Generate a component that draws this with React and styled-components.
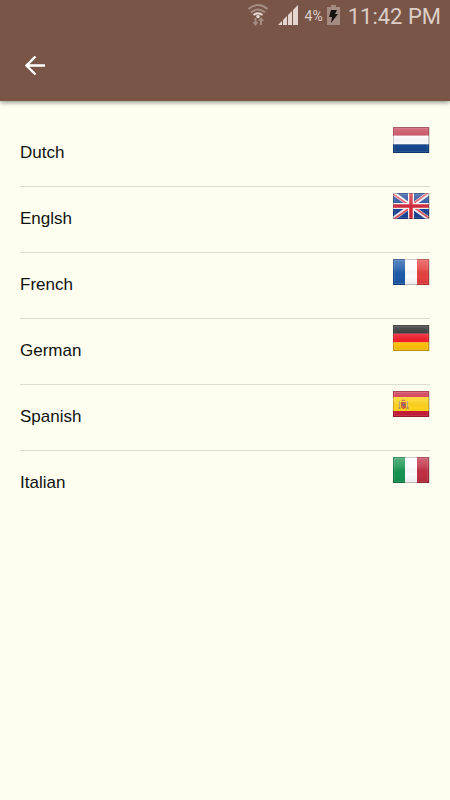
import React from "react";
import styled, { createGlobalStyle } from "styled-components";

const GlobalStyle = createGlobalStyle`
  *, *::before, *::after { box-sizing: border-box; }
  body {
    margin: 0;
    background: #fdfef0;
    color: #111;
    font-family: "Liberation Sans", Arial, sans-serif;
  }
`;

const Page = styled.div`
  min-height: 100vh;
  background: #fdfef0;
`;

const Header = styled.header`
  background: #795548;
  box-shadow: 0 1px 5px rgba(0, 0, 0, 0.5);
`;

const StatusBar = styled.div`
  display: flex;
  align-items: center;
  justify-content: flex-end;
  height: 30px;
  padding-right: 9px;
  color: #dccdc7;
  font-family: Roboto, sans-serif;

  svg { display: block; }
`;

const Battery = styled.span`
  margin: 0 4px 0 7px;
  padding-top: 2px;
  font-size: 14px;
  line-height: 20px;
`;

const Clock = styled.time`
  margin-left: 8px;
  padding-top: 4px;
  font-size: 22px;
  line-height: 26px;
`;

const Signal = styled.span`
  margin-left: 10px;
`;

const Toolbar = styled.div`
  display: flex;
  align-items: center;
  height: 71px;
  padding: 0 12px;
`;

const BackButton = styled.button`
  display: grid;
  place-items: center;
  width: 46px;
  height: 46px;
  padding: 0;
  border: 0;
  background: none;
  cursor: pointer;
`;

const LanguageList = styled.ul`
  margin: 0;
  padding: 20px;
  list-style: none;
`;

const LanguageItem = styled.li`
  border-bottom: 1px solid #dcddd0;

  &:last-child { border-bottom-color: transparent; }
`;

const LanguageButton = styled.button`
  display: flex;
  align-items: center;
  justify-content: space-between;
  width: 100%;
  height: 65px;
  padding: 0 0 2px;
  border: 0;
  background: none;
  color: inherit;
  font: 17px/20px "Liberation Sans", Arial, sans-serif;
  text-align: left;
  cursor: pointer;
`;

const FlagImage = styled.svg`
  flex: none;
  align-self: flex-start;
  width: 37px;
  height: 28px;
  margin-top: 5px;
`;

const Horizontal = ({ colors }) =>
  colors.map((c, i) => <rect key={i} y={i * 8.67} width="36" height="8.8" fill={c} />);

const Vertical = ({ colors }) =>
  colors.map((c, i) => <rect key={i} x={i * 12} width="12.1" height="26" fill={c} />);

const Union = () => (
  <>
    <rect width="36" height="26" fill="#1d4697" />
    <path d="M0 0L36 26M36 0L0 26" stroke="#f2f2f5" strokeWidth="4" />
    <path d="M0 1L17 13M35 0L18 12M1 26L18 14M36 25L19 13" stroke="#df535b" strokeWidth="1.7" />
    <path d="M18 0V26M0 13H36" stroke="#f4f4f4" strokeWidth="6" />
    <path d="M18 0V26M0 13H36" stroke="#d32638" strokeWidth="3.5" />
  </>
);

const Spain = () => (
  <>
    <rect width="36" height="26" fill="#cb1f3b" />
    <rect y="6" width="36" height="14" fill="#ffd21e" />
    <path d="M6 10h1v8H6zM14 10h1v8h-1z" fill="#b9a486" />
    <path d="M5 17h3M13 17h3" stroke="#a9825e" />
    <path d="M8 11h5v5q-2.500 4-5 0z" fill="#c96a3b" />
    <path d="M8 11h2.500v3H8z" fill="#b8523d" />
    <path d="M10.500 14H13v2l-2.500 2z" fill="#c45c45" />
    <path d="M8 10q2.500-3 5 0z" fill="#b66e37" />
    <circle cx="10.500" cy="14" r="1" fill="#68799a" />
  </>
);

const languages = [
  { id: "nl", name: "Dutch", art: <Horizontal colors={["#c33c50", "#fcfcfc", "#17488f"]} /> },
  { id: "gb", name: "Englsh", art: <Union /> },
  { id: "fr", name: "French", art: <Vertical colors={["#1c5ba9", "#fdfdfd", "#e5403e"]} /> },
  { id: "de", name: "German", art: <Horizontal colors={["#1b1b1b", "#f21e2b", "#ffc40b"]} /> },
  { id: "es", name: "Spanish", art: <Spain /> },
  { id: "it", name: "Italian", art: <Vertical colors={["#169450", "#fdfdfd", "#c02e42"]} /> },
];

function Flag({ id, children }) {
  return (
    <FlagImage viewBox="0 0 37 28" aria-hidden="true">
      <defs>
        <clipPath id={`clip-${id}`}><rect width="36" height="26" /></clipPath>
        <linearGradient id={`gloss-${id}`} x2="0" y2="1">
          <stop offset="0" stopColor="#fff" stopOpacity="0.28" />
          <stop offset="0.38" stopColor="#fff" stopOpacity="0.12" />
          <stop offset="0.65" stopColor="#000" stopOpacity="0" />
          <stop offset="1" stopColor="#000" stopOpacity="0.08" />
        </linearGradient>
      </defs>
      <rect x="0" y="1" width="37" height="26" fill="#000" opacity="0.14" />
      <g transform="translate(0 1)">
        <g clipPath={`url(#clip-${id})`}>{children}</g>
        <rect width="36" height="26" fill={`url(#gloss-${id})`} />
        <rect x="1.500" y="1.500" width="33" height="23" fill="none" stroke="#fff" opacity="0.1" />
        <rect x="0.500" y="0.500" width="35" height="25" fill="none" stroke="#000" opacity="0.2" />
      </g>
    </FlagImage>
  );
}

const WifiIcon = () => (
  <svg width="20" height="24" viewBox="0 0 20 24" aria-hidden="true">
    <g fill="none" strokeWidth="2">
      <path d="M0.500 6Q10-2 19.500 6" stroke="#a58c82" />
      <path d="M3 9.500Q10 3.500 17 9.500" stroke="#a58c82" />
      <path d="M5.500 12Q10 8.500 14.500 12" stroke="#eadbd5" />
    </g>
    <circle cx="10" cy="13.500" r="1.700" fill="#eadbd5" />
    <path d="M6.500 15h2v4h2l-3 4-3-4h2zM12 22h2v-4h2l-3-4-3 4h2z" fill="#a58c82" />
  </svg>
);

const SignalIcon = () => (
  <svg width="20" height="20" viewBox="0 0 20 20" aria-hidden="true">
    <path d="M0 20l4-4v4zM5 15l4-4v9H5zM10 10l4-4v14h-4zM15 5l5-5v20h-5z" fill="#e4d5cf" />
  </svg>
);

const BatteryIcon = () => (
  <svg width="13" height="20" viewBox="0 0 13 20" aria-hidden="true">
    <path d="M4 0h5v2h4v18H0V2h4z" fill="#a48b81" />
    <path d="M4 5h6l-2 4h3l-7 9 1-6H2z" fill="#171210" />
  </svg>
);

const BackIcon = () => (
  <svg width="20" height="20" viewBox="0 0 20 20" aria-hidden="true">
    <path d="M10.500 0.500L1.500 9.500l9 9M1.500 9.500H20" fill="none" stroke="#fff" strokeWidth="2.400" />
  </svg>
);

export default function App() {
  return (
    <Page>
      <GlobalStyle />
      <Header>
        <StatusBar>
          <WifiIcon />
          <Signal><SignalIcon /></Signal>
          <Battery>4%</Battery>
          <BatteryIcon />
          <Clock dateTime="23:42">11:42 PM</Clock>
        </StatusBar>
        <Toolbar>
          <BackButton type="button" aria-label="Back"><BackIcon /></BackButton>
        </Toolbar>
      </Header>
      <main>
        <LanguageList>
          {languages.map(({ id, name, art }) => (
            <LanguageItem key={id}>
              <LanguageButton type="button">
                {name}
                <Flag id={id}>{art}</Flag>
              </LanguageButton>
            </LanguageItem>
          ))}
        </LanguageList>
      </main>
    </Page>
  );
}
